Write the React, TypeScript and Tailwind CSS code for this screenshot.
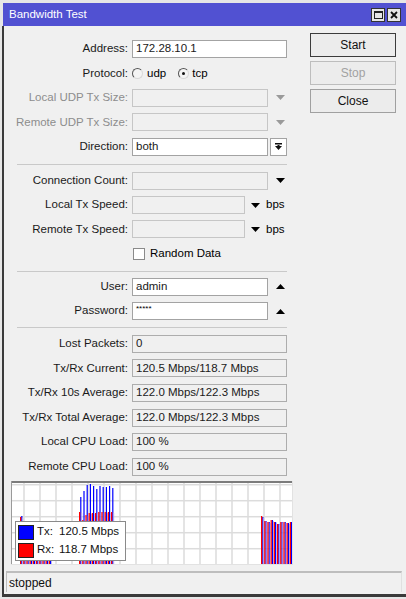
import React from "react";

const Tri = ({ up = false, color = "#000" }: { up?: boolean; color?: string }) => (
  <svg width="9" height="5" viewBox="0 0 9 5" className="block">
    <polygon points={up ? "0,5 9,5 4.5,0" : "0,0 9,0 4.5,5"} fill={color} />
  </svg>
);

const Row = ({
  label,
  disabled = false,
  children,
  h = "h-[24.5px]",
}: {
  label?: string;
  disabled?: boolean;
  children: React.ReactNode;
  h?: string;
}) => (
  <div className={`flex items-center ${h}`}>
    <div className={`w-[124px] shrink-0 text-right whitespace-nowrap ${disabled ? "text-[#8d8d8d]" : "text-[#1a1a1a]"}`}>
      {label}
    </div>
    <div className="ml-[4px] flex items-center">{children}</div>
  </div>
);

const Input = ({ w, value = "", kind = "edit" }: { w: string; value?: string; kind?: "edit" | "disabled" | "ro" }) => {
  const cls =
    kind === "edit"
      ? "bg-white border-[#a3a3a3]"
      : kind === "disabled"
      ? "bg-[#f0f0f0] border-[#c6c6c6]"
      : "bg-[#f0f0f0] border-[#adadad]";
  return (
    <div className={`${w} h-[18px] border ${cls} flex items-center pl-[3px] text-[#1a1a1a] whitespace-nowrap overflow-hidden`}>
      {value}
    </div>
  );
};

const Sep = ({ h, top }: { h: string; top: string }) => (
  <div className={`${h} relative`}>
    <div className={`absolute left-[13px] w-[270px] h-px bg-[#c9c9c9] ${top}`} />
  </div>
);

const ArrowCell = ({ children }: { children: React.ReactNode }) => (
  <div className="w-[19px] flex justify-center pl-[5px]">{children}</div>
);

const Radio = ({ checked }: { checked?: boolean }) => (
  <div className="w-[11px] h-[11px] rounded-full border border-t-[#555] border-l-[#555] border-r-[#d8d8d8] border-b-[#d8d8d8] bg-[#f4f4f4] flex items-center justify-center">
    {checked && <div className="w-[3px] h-[3px] rounded-full bg-[#111]" />}
  </div>
);

const Graph = () => {
  const vLines: number[] = [];
  for (let x = 13; x < 282; x += 16) vLines.push(x);
  const hLines = [3.7, 19.7, 35.7, 51.7, 67.7];
  const bottom = 83;
  const clusters: { x0: number; blue: number[]; red: number[] }[] = [
    { x0: 9, blue: [35, 42, 42, 43, 42, 43, 42, 43, 42, 43], red: [36, 43, 42, 43, 43, 42, 43, 42, 43, 42] },
    {
      x0: 68,
      blue: [16, 10, 4, 3, 5, 8, 5, 6, 6, 5, 7],
      red: [31, 39, 34, 32, 32, 32, 31, 31, 31, 31, 31],
    },
    {
      x0: 250,
      blue: [36, 40, 41, 39, 41, 43, 41, 41, 42, 41],
      red: [35, 40, 41, 39, 41, 43, 41, 41, 42, 41],
    },
  ];
  return (
    <svg width="282" height="84" viewBox="0 0 282 84" className="block">
      <rect x="0" y="0" width="282" height="84" fill="#fff" />
      {vLines.map((x) => (
        <rect key={"v" + x} x={x - 0.75} y="0" width="1.5" height="84" fill="#dcdcdc" />
      ))}
      {hLines.map((y) => (
        <rect key={"h" + y} x="0" y={y - 0.75} width="282" height="1.5" fill="#dcdcdc" />
      ))}
      {clusters.map((c, ci) =>
        c.blue.map((b, i) => {
          const x = c.x0 + i * 3.2;
          return (
            <g key={ci + "-" + i}>
              <rect x={x + 1.2} y={b} width="1.2" height={bottom - b} fill="#0000ff" />
              <rect x={x} y={c.red[i]} width="1.2" height={bottom - c.red[i]} fill="#ff0000" />
              <rect x={x + 2.4} y={Math.max(b, c.red[i]) + 1} width="0.8" height={bottom - Math.max(b, c.red[i]) - 1} fill="#b9b0f0" />
            </g>
          );
        })
      )}
      <rect x="0" y="0" width="282" height="2" fill="#7c7c7c" />
      <rect x="0" y="0" width="1" height="84" fill="#9a9a9a" />
      <rect x="281" y="0" width="1" height="84" fill="#e2e2e2" />
      <rect x="0" y="83" width="282" height="1" fill="#e2e2e2" />
    </svg>
  );
};

const Btn = ({ label, variant }: { label: string; variant: "default" | "disabled" | "normal" }) => {
  const cls =
    variant === "default"
      ? "border-[#3c3c3c] border-[1.5px] text-[#111]"
      : variant === "disabled"
      ? "border-[#bdbdbd] text-[#a2a2a2]"
      : "border-[#a0a0a0] text-[#111]";
  return (
    <div className={`w-[86px] h-[24px] border ${cls} bg-[#ececec] flex items-center justify-center text-[12px]`}>
      {label}
    </div>
  );
};

export default function App() {
  return (
    <div className="w-[406px] h-[599px] bg-[#e6e6e6] pt-[3px] pl-[2px] font-['Liberation_Sans',Arial,sans-serif] text-[11.5px] leading-none overflow-hidden">
      <div className="flex flex-col h-[594px]">
        {/* title bar */}
        <div className="h-[23px] ml-[1px] bg-[#5151d2] flex items-center justify-between">
          <div className="pl-[6px] text-white text-[11.5px]">Bandwidth Test</div>
          <div className="flex gap-[2px] pr-[5px]">
            <div className="w-[14px] h-[14px] bg-[#e6e6e6] border border-[#333] flex items-center justify-center">
              <div className="w-[9px] h-[8px] border border-[#222] border-t-2" />
            </div>
            <div className="w-[14px] h-[14px] bg-[#e6e6e6] border border-[#333] flex items-center justify-center">
              <svg width="8" height="8" viewBox="0 0 8 8">
                <path d="M1 1 L7 7 M7 1 L1 7" stroke="#111" strokeWidth="1.8" />
              </svg>
            </div>
          </div>
        </div>
        {/* body */}
        <div className="flex-1 bg-[#f0f0f0] border-l-2 border-b-[3px] border-[#3a3a3a] flex flex-col">
          <div className="flex">
            {/* form */}
            <div className="w-[304px] pt-[10.5px]">
              <Row label="Address:">
                <Input w="w-[155px]" value="172.28.10.1" />
              </Row>
              <Row label="Protocol:">
                <div className="flex items-center">
                  <Radio />
                  <span className="ml-[4px]">udp</span>
                  <div className="ml-[12px]">
                    <Radio checked />
                  </div>
                  <span className="ml-[3px]">tcp</span>
                </div>
              </Row>
              <Row label="Local UDP Tx Size:" disabled>
                <Input w="w-[136px]" kind="disabled" />
                <ArrowCell>
                  <Tri color="#9a9a9a" />
                </ArrowCell>
              </Row>
              <Row label="Remote UDP Tx Size:" disabled>
                <Input w="w-[136px]" kind="disabled" />
                <ArrowCell>
                  <Tri color="#9a9a9a" />
                </ArrowCell>
              </Row>
              <Row label="Direction:">
                <Input w="w-[136px]" value="both" />
                <div className="ml-[2px] w-[17px] h-[18px] bg-white border border-[#a3a3a3] flex items-center justify-center">
                  <svg width="7" height="8" viewBox="0 0 7 8">
                    <rect x="0" y="0" width="7" height="1.5" fill="#111" />
                    <polygon points="0,3 7,3 3.5,7" fill="#111" />
                    <rect x="2.5" y="2" width="2" height="2" fill="#111" />
                  </svg>
                </div>
              </Row>
              <Sep h="h-[9.5px]" top="top-[4.5px]" />
              <div className="[&>div]:h-[24.4px]">
                <Row label="Connection Count:">
                  <Input w="w-[136px]" kind="disabled" />
                  <ArrowCell>
                    <Tri />
                  </ArrowCell>
                </Row>
                <Row label="Local Tx Speed:">
                  <Input w="w-[113px]" kind="disabled" />
                  <div className="ml-[6px]">
                    <Tri />
                  </div>
                  <span className="ml-[6px]">bps</span>
                </Row>
                <Row label="Remote Tx Speed:">
                  <Input w="w-[113px]" kind="disabled" />
                  <div className="ml-[6px]">
                    <Tri />
                  </div>
                  <span className="ml-[6px]">bps</span>
                </Row>
                <Row label="">
                  <div className="flex items-center">
                    <div className="w-[12px] h-[12px] ml-[1px] bg-white border border-[#8a8a8a]" />
                    <span className="ml-[5px]">Random Data</span>
                  </div>
                </Row>
              </div>
              <Sep h="h-[8.4px]" top="top-[5.4px]" />
              <Row label="User:">
                <Input w="w-[136px]" value="admin" />
                <ArrowCell>
                  <Tri up />
                </ArrowCell>
              </Row>
              <Row label="Password:">
                <div className="w-[136px] h-[18px] border bg-white border-[#a3a3a3] pl-[3px] pt-[2px] text-[8px] leading-none tracking-[0px]">
                  *****
                </div>
                <ArrowCell>
                  <Tri up />
                </ArrowCell>
              </Row>
              <Sep h="h-[8px]" top="top-[4px]" />
              <div className="[&>div]:h-[24.6px]">
                <Row label="Lost Packets:">
                  <Input w="w-[155px]" kind="ro" value="0" />
                </Row>
                <Row label="Tx/Rx Current:">
                  <Input w="w-[155px]" kind="ro" value="120.5 Mbps/118.7 Mbps" />
                </Row>
                <Row label="Tx/Rx 10s Average:">
                  <Input w="w-[155px]" kind="ro" value="122.0 Mbps/122.3 Mbps" />
                </Row>
                <Row label="Tx/Rx Total Average:">
                  <Input w="w-[155px]" kind="ro" value="122.0 Mbps/122.3 Mbps" />
                </Row>
                <Row label="Local CPU Load:">
                  <Input w="w-[155px]" kind="ro" value="100 %" />
                </Row>
                <Row label="Remote CPU Load:">
                  <Input w="w-[155px]" kind="ro" value="100 %" />
                </Row>
              </div>
            </div>
            {/* buttons */}
            <div className="pt-[7px] ml-[2px] flex flex-col gap-[4px]">
              <Btn label="Start" variant="default" />
              <Btn label="Stop" variant="disabled" />
              <Btn label="Close" variant="normal" />
            </div>
          </div>
          {/* graph */}
          <div className="relative ml-[7px] mt-[2px] w-[282px] h-[84px]">
            <Graph />
            <div className="absolute left-[4px] top-[40px] w-[111px] h-[40px] bg-white border border-[#8a8a8a] flex flex-col justify-center gap-[3px] pl-[2px] text-[11.5px] text-[#111]">
              <div className="flex items-center">
                <div className="w-[16px] h-[15px] bg-[#0000ff] border border-[#222]" />
                <span className="ml-[3px] w-[22px]">Tx:</span>
                <span>120.5 Mbps</span>
              </div>
              <div className="flex items-center">
                <div className="w-[16px] h-[15px] bg-[#ff0000] border border-[#222]" />
                <span className="ml-[3px] w-[22px]">Rx:</span>
                <span>118.7 Mbps</span>
              </div>
            </div>
          </div>
          {/* status */}
          <div className="ml-[2px] mt-[6px] w-[396px] h-[21px] border-t-2 border-l border-[#bdbdbd] border-r border-r-[#e0e0e0] flex items-center pl-[2px] text-[12px] text-[#111]">
            stopped
          </div>
        </div>
      </div>
    </div>
  );
}
